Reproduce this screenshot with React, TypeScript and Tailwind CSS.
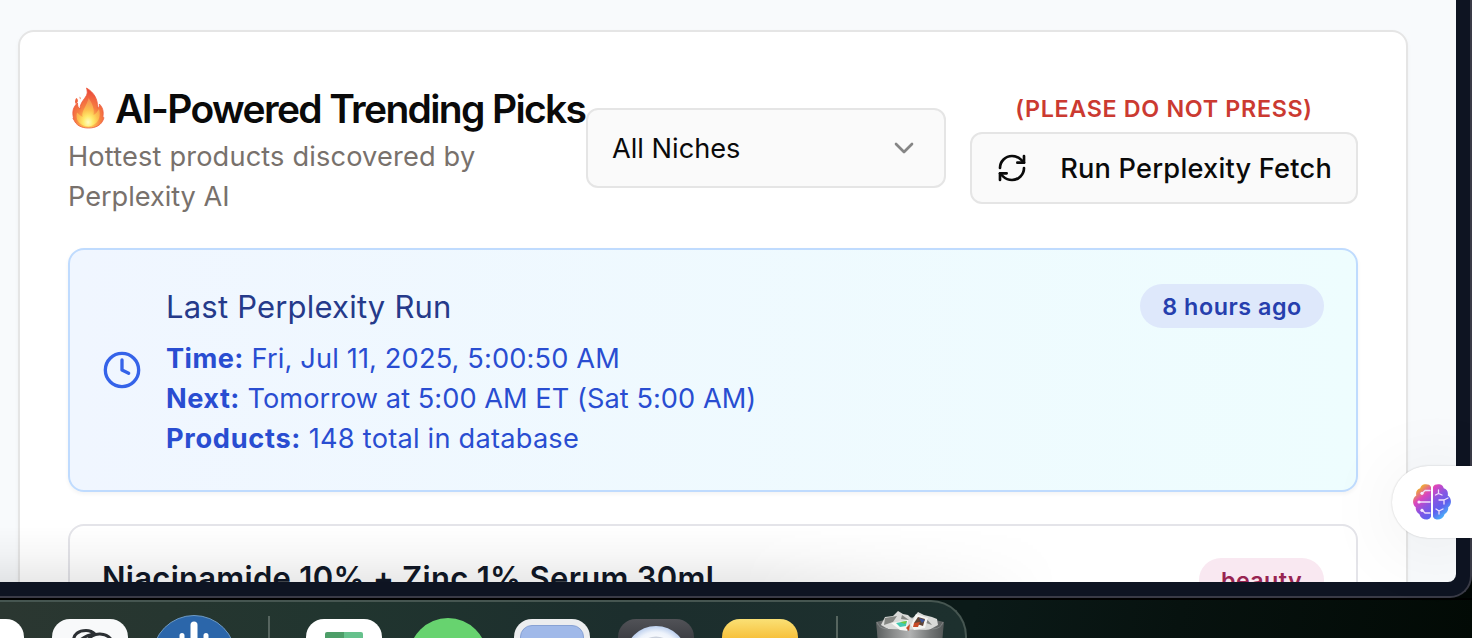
import React from "react";
import { ChevronDown, Clock, RefreshCw } from "lucide-react";

function Flame() {
  return (
    <svg className="h-[42px] w-[40px] shrink-0" viewBox="0 0 40 42" aria-hidden="true">
      <defs>
        <radialGradient id="fl" cx="0.5" cy="0.85" r="0.8">
          <stop offset="0" stopColor="#ffef70" />
          <stop offset="0.25" stopColor="#fdb84e" />
          <stop offset="0.5" stopColor="#f67f42" />
          <stop offset="0.8" stopColor="#f05f3f" />
          <stop offset="1" stopColor="#e9483a" />
        </radialGradient>
        <radialGradient id="fi" cx="0.5" cy="0.85" r="0.85">
          <stop offset="0" stopColor="#fffed0" />
          <stop offset="0.25" stopColor="#fff170" />
          <stop offset="0.5" stopColor="#fdc850" />
          <stop offset="1" stopColor="#f58f58" />
        </radialGradient>
      </defs>
      <path d="M18.500 1C26 5.500 30 12 29.500 21C31 20.500 31.600 19 31.300 17C34.500 20 36 24.500 34.800 30C36 30 36 31 35.500 32C33.500 38 28 41 20.500 41C13 41 8 38 6 33C4.500 31.500 5 31 5.500 31C4 25 5 20 9.500 16C9.500 19 10 20.500 12 22C12 15 18 11 19 7C19.500 5 19 3 18.500 1Z" fill="url(#fl)" stroke="#ee5a3c" strokeWidth="0.8" />
      <path d="M20.500 11C25 17 26.500 23 25.500 28C28 27 29 25 31 22C33.500 30 30 38 20.500 39.500C11 39 7 32 9 25.500C11 27 12.500 29 14.500 30C13 24 19.500 18 20.500 11Z" fill="url(#fi)" opacity="0.85" />
      <path d="M8.300 11C10.500 12.500 10.500 15 8 17.200C6.500 15.500 6.800 13 8.300 11ZM11.500 9.500L12.800 11L12 12.500Z" fill="#f0643e" />
    </svg>
  );
}

function Brain() {
  return (
    <svg className="h-[38px] w-[40px]" viewBox="0 0 40 38" aria-hidden="true">
      <defs>
        <linearGradient id="br" x1="0.1" y1="0.05" x2="0.9" y2="0.95">
          <stop offset="0.06" stopColor="#f0b02c" />
          <stop offset="0.28" stopColor="#dc45bd" />
          <stop offset="0.5" stopColor="#8a55e2" />
          <stop offset="0.72" stopColor="#5f60ee" />
          <stop offset="0.95" stopColor="#48b8fa" />
        </linearGradient>
      </defs>
      <path fill="url(#br)" d="M19 4C18 1.500 15.500 1 12.500 1.300C10 1.800 8.500 3.500 8.300 5.300C5 6 3.500 9 4.300 12.500C1.500 14.500.7 17.500 1.200 20C1.500 22 2.500 23.200 3.800 24.200C3.500 27.500 4.800 29.800 7.300 31C8.500 35 12 37 15.500 36.500C17.500 36 18.500 35 19 33.500ZM21 4C22 1.500 24.500 1 27.500 1.300C30 1.800 31.500 3.500 31.700 5.300C35 6 36.500 9 35.700 12.500C38.500 14.500 39.300 17.500 38.800 20C38.500 22 37.500 23.200 36.200 24.200C36.500 27.500 35.200 29.800 32.700 31C31.500 35 28 37 24.500 36.500C22.500 36 21.500 35 21 33.500Z" />
      <path fill="none" stroke="#f0defc" strokeWidth="1.300" strokeLinecap="round" strokeLinejoin="round" d="M18 7.500H13L10.500 10M7 19H18M10.500 27.500L13 30H18M26.500 7V10.500L23.500 12M26.500 10.500L30 12M27 17H32L36 15M32 17V21M24 26L27 28L31 26M27 28V31" />
      <g fill="#f7ecff"><circle cx="10" cy="10.300" r="1.600" /><circle cx="7" cy="19" r="1.600" /><circle cx="10" cy="27.300" r="1.600" /></g>
    </svg>
  );
}

function Trash() {
  return (
    <svg className="-mt-[8px] h-[30px] w-[68px]" viewBox="0 0 68 30" aria-hidden="true">
      <defs>
        <linearGradient id="tr" x1="0" x2="1" y1="0" y2="0">
          <stop offset="0" stopColor="#5d6161" />
          <stop offset="0.25" stopColor="#8b8d8d" />
          <stop offset="0.5" stopColor="#b2b3b3" />
          <stop offset="0.8" stopColor="#747777" />
          <stop offset="1" stopColor="#565a5a" />
        </linearGradient>
      </defs>
      <path d="M0 11Q34 2 68 11L66 30H2Z" fill="url(#tr)" />
      <path d="M5 14L9 6L17 5L22 0L27 3L32 4L36 8L42 1L48 4L56 6L61 8L62 14L53 19L12 18Z" fill="#d9dad8" />
      <path d="M9 7L21 5L17 11L8 14ZM26 4L33 9L25 8ZM49 6L56 14L50 12Z" fill="#858783" />
      <path d="M15 12L32 9L31 20L24 19Z" fill="#f7f7f3" />
      <path d="M20 12L31 10L30 15L24 16Z" fill="#42c9b0" />
      <path d="M24 11L31 10L29 13Z" fill="#75c93a" />
      <path d="M35 14L40 3L52 7L49 17L38 19Z" fill="#f5f5f2" />
      <path d="M38 12L42 6L49 8L47 15Z" fill="#604536" />
      <path d="M43 7L49 9L46 12Z" fill="#3a549b" />
      <path d="M38 12L44 11L42 16L37 16ZM30 17L34 13L33 20Z" fill="#c84b27" />
      <path d="M1 14Q12 20 34 20T67 14L66 30H2Z" fill="url(#tr)" />
      <path d="M1 11Q3 18 12 18M67 11Q65 18 56 18" fill="none" stroke="#8d9190" strokeWidth="0.8" />
    </svg>
  );
}

const tile = "h-[76px] w-[76px] shrink-0 rounded-[18px]";

function Dock() {
  return (
    <div className="h-[38px] overflow-hidden bg-[linear-gradient(100deg,#0b1a18_66%,#07120f_80%,#020a05_100%)]">
      <div className="flex h-[120px] w-[967px] items-start gap-[28px] rounded-tr-[36px] border-t-2 border-r-2 border-[#465651] bg-[linear-gradient(90deg,#2b3731,#21352f_35%,#1c2e2d_65%,#1d302e)] pt-[17px]">
        <div className="-ml-[52px] h-[76px] w-[76px] shrink-0 rounded-[18px] bg-white" />
        <div className={tile + " bg-[#f8f9fa]"}>
          <svg className="size-full" viewBox="0 0 76 76" fill="none" stroke="#2b2f33" strokeWidth="3">
            <path d="M21.500 23C21 15 27 11.500 34 11.500C38 11.500 41 13 43.500 15.500M36 22C37 18 42 14.800 48 15C54 15.200 58 18 60 22M29 20.500C34 16.500 38 15.500 43 15" />
          </svg>
        </div>
        <svg className="-mt-[4px] h-[80px] w-[76px] shrink-0 overflow-visible" viewBox="0 0 76 80">
          <circle cx="38" cy="42" r="41.500" fill="#2b66aa" stroke="#6d9ac5" strokeWidth="1" />
          <path d="M38 10V50" stroke="white" strokeWidth="7" strokeLinecap="round" />
          <path d="M26 20.500V50M50 20.500V50" stroke="white" strokeWidth="5" strokeLinecap="round" />
        </svg>
        <div className="-mt-[3px] flex h-[60px] w-[18px] shrink-0 justify-center"><div className="w-[2px] bg-[#56655f]" /></div>
        <div className={tile + " bg-white px-[19px] pt-[13px]"}>
          <div className="flex h-[40px] overflow-hidden rounded-t-[2px]"><div className="w-1/2 bg-[#4d9e68]" /><div className="w-1/2 bg-[#66c18c]" /></div>
        </div>
        <svg className="-mt-[1px] h-[80px] w-[76px] shrink-0 overflow-visible" viewBox="0 0 76 80"><circle cx="38" cy="39" r="39" fill="#67d36f" /></svg>
        <div className={tile + " bg-[#ecedef] p-[6px]"}><div className="h-full rounded-[12px] border border-[#88a2d4] bg-[#a0b9e9]" /></div>
        <div className={tile + " bg-[linear-gradient(#515257,#34363b_28px)]"}>
          <svg className="size-full" viewBox="0 0 76 76">
            <defs>
              <radialGradient id="lens">
                <stop offset="0.5" stopColor="#ffffff" />
                <stop offset="0.8" stopColor="#eef3fb" />
                <stop offset="1" stopColor="#bdd0ee" />
              </radialGradient>
            </defs>
            <circle cx="38" cy="38" r="31" fill="url(#lens)" />
            <circle cx="38" cy="38" r="20.500" fill="#c9cfdb" />
          </svg>
        </div>
        <div className={tile + " bg-[linear-gradient(#fae075,#f7c03a_20px)]"} />
        <div className="-mt-[3px] flex h-[60px] w-[22px] shrink-0 justify-center"><div className="w-[2px] bg-[#56655f]" /></div>
        <Trash />
      </div>
    </div>
  );
}

export default function App() {
  return (
    <div className="relative h-[638px] w-[1472px] overflow-hidden bg-black font-['Inter','Liberation_Sans',sans-serif]">
      <div className="bg-[#020705]">
        <div className="h-[598px] overflow-hidden rounded-br-[22px] border-r-2 border-b-2 border-[#3a3b47] bg-[#0e1422] pr-[14px] pb-[14px]">
          <div className="relative h-[582px] overflow-hidden rounded-br-[8px] bg-[#f8fafc] pt-[30px] pr-[48px] pl-[18px]">
            <main className="h-[700px] rounded-[16px] border-2 border-[#e5e5e5] bg-white p-[48px] shadow-[0_2px_4px_rgba(0,0,0,0.04)]">
              <header className="flex h-[136px] items-center">
                <div className="w-[518px] shrink-0">
                  <h1 className="flex h-[56px] items-center whitespace-nowrap text-[39px] leading-[56px] font-semibold tracking-[-1.660px] text-[#0a0a0a]">
                    <Flame />
                    <span className="ml-[7px] pt-[2px]">AI-Powered Trending Picks</span>
                  </h1>
                  <p className="-mb-px pt-px text-[27.200px] leading-[40px] tracking-[0.160px] text-[#78716c]">Hottest products discovered by<br /><span className="tracking-[-0.050px]">Perplexity AI</span></p>
                </div>
                <button className="flex h-[80px] w-[360px] shrink-0 items-center justify-between rounded-[12px] border-2 border-[#e5e5e5] bg-[#fafafa] px-[24px] text-[27.200px] text-[#0a0a0a]">
                  <span className="pt-[2px] tracking-normal">All Niches</span>
                  <ChevronDown className="size-[32px] text-[#858585]" strokeWidth={2} />
                </button>
                <div className="ml-[24px] flex w-[388px] shrink-0 flex-col items-center gap-[8px]">
                  <span className="h-[32px] text-[23.300px] leading-[34px] font-semibold tracking-[0.680px] whitespace-nowrap text-[#cb3a31]">(PLEASE DO NOT PRESS)</span>
                  <button className="flex h-[72px] w-full items-center justify-between rounded-[12px] border-2 border-[#e5e5e5] bg-[#fafafa] px-[24px] text-[27.200px] font-medium whitespace-nowrap text-[#0a0a0a]">
                    <RefreshCw className="size-[32px]" strokeWidth={2} />
                    <span className="pt-[2px] tracking-[0.220px]">Run Perplexity Fetch</span>
                  </button>
                </div>
              </header>
              <section className="mt-[32px] flex h-[244px] items-center gap-[24px] rounded-[16px] border-2 border-[#bfdbfe] bg-linear-to-r from-[#f0f6ff] to-[#eefdfe] px-[32px] shadow-[0_2px_4px_rgba(0,0,0,0.05)]">
                <Clock className="size-[40px] shrink-0 text-[#3563e9]" strokeWidth={2} />
                <div className="flex-1">
                  <div className="flex h-[48px] items-center justify-between">
                    <h2 className="pt-[2px] text-[31px] leading-[48px] tracking-[0.200px] text-[#253a8a]"><span>Last Perplexity Run</span></h2>
                    <div className="flex h-[44px] w-[184px] items-center justify-center rounded-full bg-[#dee8fb] pt-[2px] text-[23.300px] font-semibold tracking-[0.540px] whitespace-nowrap text-[#263fae]"><span>8 hours ago</span></div>
                  </div>
                  <div className="-mb-px mt-[9px] text-[27.200px] leading-[40px] text-[#294dd1]">
                    <p><strong className="font-bold tracking-[0.450px]">Time:</strong> <span className="tracking-[0.150px]">Fri, Jul 11, 2025, 5:00:50 AM</span></p>
                    <p><strong className="font-bold tracking-[0.450px]">Next:</strong> <span className="tracking-[0.040px]">Tomorrow at 5:00 AM ET (Sat 5:00 AM)</span></p>
                    <p><strong className="font-bold tracking-[0.700px]">Products:</strong> <span className="tracking-[0.230px]">148 total in database</span></p>
                  </div>
                </div>
              </section>
              <section className="mt-[32px] flex h-[200px] items-start justify-between rounded-[16px] border-2 border-[#e4e4e9] bg-white p-[32px]">
                <h3 className="text-[31px] leading-[40px] font-semibold tracking-[0.280px] whitespace-nowrap text-[#111827]"><span>Niacinamide 10% + Zinc 1% Serum 30ml</span></h3>
                <div className="flex h-[44px] w-[125px] items-center justify-center rounded-full bg-[#f9e8f1] pt-[2px] text-[23.300px] font-semibold tracking-[0.400px] text-[#982451]"><span>beauty</span></div>
              </section>
            </main>
            <div className="pointer-events-none absolute bottom-0 left-0 h-[56px] w-[1060px] bg-[linear-gradient(to_top,rgba(0,0,0,0.085),rgba(0,0,0,0.03)_50%,transparent)] mask-[linear-gradient(to_right,black_70%,transparent)]" />
          </div>
        </div>
        <div className="h-[2px] bg-black" />
      </div>
      <Dock />
      <div className="absolute top-[466px] right-0 flex h-[72px] w-[80px] items-center rounded-l-full bg-white pl-[20px] shadow-[0_0_2px_rgba(0,0,0,0.2),0_8px_80px_rgba(0,0,0,0.08)]">
        <Brain />
      </div>
    </div>
  );
}
